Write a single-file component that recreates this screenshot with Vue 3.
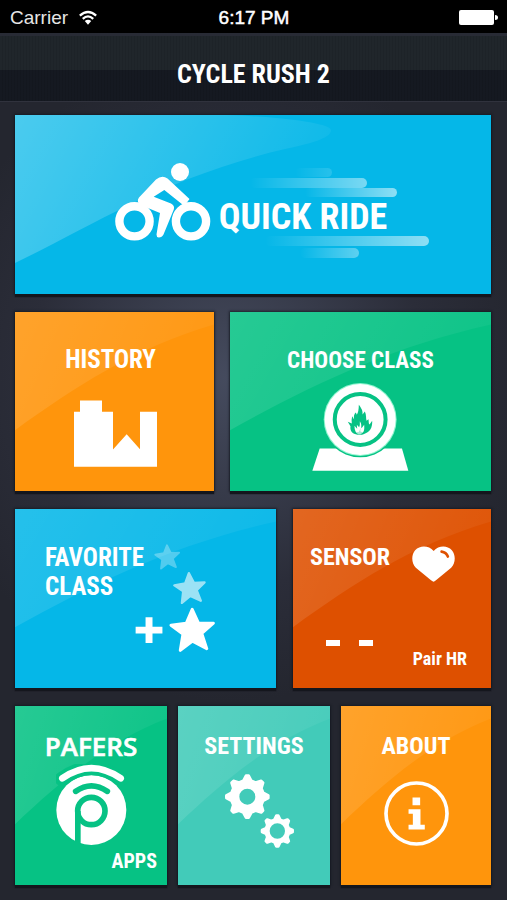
<script setup>
function gear(cx, cy, outer, inner, hole) {
  const teeth = 8
  const step = (Math.PI * 2) / teeth
  const at = (r, a) => `${(cx + r * Math.sin(a)).toFixed(1)} ${(cy - r * Math.cos(a)).toFixed(1)}`
  let d = ''
  for (let i = 0; i < teeth; i++) {
    const a = i * step
    d += `${i ? 'L' : 'M'}${at(inner, a - step * 0.32)}L${at(outer, a - step * 0.08)}L${at(outer, a + step * 0.08)}L${at(inner, a + step * 0.32)}`
  }
  return `${d}Z M${cx - hole} ${cy}a${hole} ${hole} 0 1 0 ${hole * 2} 0a${hole} ${hole} 0 1 0 ${-hole * 2} 0Z`
}

const bigGear = gear(233, 305, 63, 49, 28)
const smallGear = gear(323, 408, 46, 35, 27)
const star = 'M0 -62L19 -20L64 -20L29 11L44 57L1 34L-36 62L-28 13L-64 -14L-18 -20Z'
const gloss = 'M0 0H100V7C60 20 30 42 0 66Z'
</script>

<template>
  <main class="screen">
    <div class="status">
      <div class="carrier">
        <span>Carrier</span>
        <svg class="wifi" viewBox="0 0 60 46" aria-hidden="true">
          <path d="M5 17Q30 -5 55 17M14 27Q30 12 46 27" fill="none" stroke="#fff" stroke-width="7" />
          <path d="M20 34Q30 26 40 34L30 45Z" fill="#fff" />
        </svg>
      </div>
      <span class="clock">6:17 PM</span>
      <svg class="battery" viewBox="0 0 39 16" aria-hidden="true">
        <rect width="35" height="15" rx="2" fill="#fff" />
        <path d="M36 5Q39 5 39 7.5T36 10Z" fill="#fff" />
      </svg>
    </div>

    <header class="bar"><h1>CYCLE RUSH 2</h1></header>

    <nav class="tiles">
      <button class="tile blue hero">
        <svg class="cover" viewBox="0 0 476 179" preserveAspectRatio="none" aria-hidden="true">
          <defs>
            <linearGradient id="shine" x1="0" y1="0" x2="1" y2="0.25">
              <stop offset="0" stop-color="#fff" stop-opacity=".28" />
              <stop offset="1" stop-color="#fff" stop-opacity=".04" />
            </linearGradient>
            <linearGradient id="sheen" x1="0" y1="0" x2="1" y2="0.25">
              <stop offset="0" stop-color="#fff" stop-opacity=".13" />
              <stop offset="1" stop-color="#fff" stop-opacity=".04" />
            </linearGradient>
            <linearGradient id="trail">
              <stop offset="0" stop-color="#fff" stop-opacity="0" />
              <stop offset="1" stop-color="#fff" stop-opacity=".55" />
            </linearGradient>
          </defs>
          <path d="M0 0H210C275 2 315 9 316 15C316 22 303 27 270 34C150 62 75 112 0 148Z" fill="url(#shine)" />
          <g fill="url(#trail)">
            <rect x="280" y="53" width="37" height="9" rx="4.5" opacity=".25" />
            <rect x="235" y="63" width="117" height="10" rx="5" opacity=".85" />
            <rect x="290" y="73" width="92" height="9" rx="4.5" />
            <rect x="250" y="121" width="164" height="10" rx="5" />
            <rect x="285" y="133" width="59" height="10" rx="5" opacity=".65" />
          </g>
        </svg>
        <svg class="cyclist" viewBox="0 0 96 78" aria-hidden="true">
          <g fill="none" stroke="#fff" stroke-width="8.4">
            <circle cx="19.5" cy="58.3" r="15.1" />
            <circle cx="76" cy="58.3" r="15.1" />
          </g>
          <circle cx="65" cy="9" r="9" fill="#fff" />
          <path fill="#fff" d="M24 34.500L41 16.500Q47 11.500 52.500 15.500L74.500 36L69.300 43L49.300 27L38.700 33.700L56 40.500Q60 42.500 58.800 46.500L48.500 71.500Q47 74.500 43.800 74.500Q41.300 74 41.500 71.500L45 50L25.500 42Q21 38.500 24 34.500Z" />
        </svg>
        <span class="label large">QUICK RIDE</span>
      </button>

      <div class="row history-row">
        <button class="tile orange history">
          <svg class="cover" viewBox="0 0 100 100" preserveAspectRatio="none" aria-hidden="true"><path :d="gloss" fill="url(#sheen)" /></svg>
          <span class="label wide">HISTORY</span>
          <svg class="book" viewBox="222 300 249 200" aria-hidden="true">
            <path d="M222 335H240V301H306V335H339V448L380 402L420 447V335H471V500H222Z" fill="#fff" />
          </svg>
        </button>
        <button class="tile green">
          <svg class="cover" viewBox="0 0 100 100" preserveAspectRatio="none" aria-hidden="true"><path :d="gloss" fill="url(#sheen)" /></svg>
          <span class="label narrow">CHOOSE CLASS</span>
          <svg class="medal" viewBox="277 246 290 266" aria-hidden="true">
            <path d="M300 445H546L565 511H278Z" fill="#fff" />
            <circle cx="421" cy="358" r="113" fill="#06c284" />
            <circle cx="421" cy="358" r="109" fill="#8ff5cf" />
            <circle cx="421" cy="358" r="106" fill="#fff" />
            <circle cx="421" cy="358" r="76" fill="none" stroke="#06c284" stroke-width="12" />
            <path fill="#06c284" d="M417 314C427 327 429 334 428 343L435 334C440 345 438 353 440 362L446 357C447 366 446 370 449 373L457 362C458 383 450 397 431 402Q421 405 408 402C393 399 391 387 392 378L384 365L396 370Q394 362 397 348L403 358Q400 344 408 337L411 344Q417 334 417 314Z" />
            <path fill="#fff" d="M420 363C427 373 423 378 425 384L433 374C434 388 434 397 422 402H415C408 399 404 391 404 377L412 386L411 374L418 381Q421 375 420 363Z" />
            <path fill="#06c284" d="M421 383Q423 389 421 393Q429 394 430 402H408Q409 394 416 396Q421 391 421 383Z" opacity=".35" />
          </svg>
        </button>
      </div>

      <div class="row favorite-row">
        <button class="tile blue favorite">
          <svg class="cover" viewBox="0 0 100 100" preserveAspectRatio="none" aria-hidden="true"><path :d="gloss" fill="url(#sheen)" /></svg>
          <span class="favorite-top">
            <span class="label wide">FAVORITE<br />CLASS</span>
            <svg class="stars" viewBox="462 126 156 182" aria-hidden="true">
              <g fill="#fff" stroke="#fff" stroke-linejoin="round" stroke-width="10">
                <path :d="star" transform="translate(502 167) rotate(-2) scale(.56)" opacity=".3" />
                <path :d="star" transform="translate(569 260) rotate(-3) scale(.71)" opacity=".6" />
              </g>
            </svg>
          </span>
          <svg class="add-star" viewBox="404 320 240 136" aria-hidden="true">
            <path d="M435 351H456V380H486V400H456V429H435V400H405V380H435Z" fill="#fff" />
            <path :d="star" transform="translate(576 389)" fill="#fff" stroke="#fff" stroke-width="9" stroke-linejoin="round" />
          </svg>
        </button>
        <button class="tile red sensor">
          <svg class="cover" viewBox="0 0 100 100" preserveAspectRatio="none" aria-hidden="true"><path :d="gloss" fill="url(#sheen)" /></svg>
          <span class="sensor-top">
            <span class="label">SENSOR</span>
            <svg class="heart" viewBox="399 137 129 109" aria-hidden="true">
              <path fill="#fff" d="M464 245Q461 245 456 241L410 203C396 188 396 164 408 150C423 134 449 135 464 152C479 135 505 134 519 150C531 164 531 188 517 203L471 241Q466 245 464 245Z" />
              <path d="M488 154Q502 156 507 169" fill="none" stroke="#de5000" stroke-width="8" stroke-linecap="round" />
            </svg>
          </span>
          <span class="reading" aria-label="No reading"><i></i><i></i></span>
          <span class="pair">Pair HR</span>
        </button>
      </div>

      <div class="row last-row">
        <button class="tile green pafers">
          <svg class="cover" viewBox="0 0 100 100" preserveAspectRatio="none" aria-hidden="true"><path :d="gloss" fill="url(#sheen)" /></svg>
          <span class="brand">PAFERS</span>
          <svg class="logo" viewBox="166 204 213 243" aria-hidden="true">
            <circle cx="272" cy="342" r="105" fill="#fff" />
            <g fill="none" stroke-linecap="round">
              <path d="M183 249Q272 184 362 249" stroke="#06c284" stroke-width="42" />
              <path d="M185 247Q272 186 360 247" stroke="#fff" stroke-width="20" />
              <path d="M225 286Q272 253 320 286" stroke="#06c284" stroke-width="17" />
            </g>
            <circle cx="272" cy="345" r="41" fill="none" stroke="#06c284" stroke-width="17" />
            <path d="M223 345H240V447H223Z" fill="#06c284" />
          </svg>
          <span class="apps">APPS</span>
        </button>
        <button class="tile teal">
          <svg class="cover" viewBox="0 0 100 100" preserveAspectRatio="none" aria-hidden="true"><path :d="gloss" fill="url(#sheen)" /></svg>
          <span class="label">SETTINGS</span>
          <svg class="gears" viewBox="163 237 213 222" aria-hidden="true">
            <g fill="#fff" fill-rule="evenodd" stroke="#fff" stroke-width="8" stroke-linejoin="round">
              <path :d="bigGear" />
              <path :d="smallGear" />
            </g>
          </svg>
        </button>
        <button class="tile orange">
          <svg class="cover" viewBox="0 0 100 100" preserveAspectRatio="none" aria-hidden="true"><path :d="gloss" fill="url(#sheen)" /></svg>
          <span class="label">ABOUT</span>
          <svg class="info" viewBox="163 256 196 196" aria-hidden="true">
            <circle cx="261" cy="354" r="92" fill="none" stroke="#fff" stroke-width="11" />
            <path fill="#fff" d="M249 306H272V329H249ZM237 341H273V388H286V402H237V388H250V355H237Z" />
          </svg>
        </button>
      </div>
    </nav>
  </main>
</template>

<style>
body {
  margin: 0;
  background: #24262f;
}
</style>

<style scoped>
.screen {
  min-height: 100vh;
  box-sizing: border-box;
  color: #fff;
  font-family: "Liberation Sans Narrow", "Roboto Condensed", "Liberation Sans", sans-serif;
  background: radial-gradient(ellipse 60% 36% at 45% 42%, #454b5e, #2b2d39 65%, #24262f);
}
.status {
  display: grid;
  grid-template-columns: 1fr auto 1fr;
  align-items: center;
  height: 33px;
  padding: 2px 9px 0 10px;
  box-sizing: border-box;
  background: #000;
  font: 19px/22px "Liberation Sans", Arial, sans-serif;
}
.carrier {
  display: flex;
  align-items: center;
  gap: 10px;
  color: #e6e6e6;
}
.wifi {
  width: 20px;
  height: 15px;
}
.clock {
  -webkit-text-stroke: 0.5px #fff;
}
.battery {
  width: 39px;
  height: 16px;
  justify-self: end;
}
.bar {
  height: 69px;
  box-sizing: border-box;
  display: flex;
  align-items: center;
  justify-content: center;
  padding-top: 10px;
  border-top: 3px solid #282b35;
  border-bottom: 1px solid #30323d;
  background:
    repeating-linear-gradient(90deg, transparent 0 2px, rgba(0, 0, 0, 0.08) 2px 3px),
    linear-gradient(#20262b 0 52%, #151921 52%);
}
h1 {
  margin: 0;
  font-size: 26px;
  line-height: 28px;
  font-weight: 700;
}
.tiles {
  display: flex;
  flex-direction: column;
  gap: 18px;
  padding: 13px 16px 15px 15px;
}
.row {
  display: grid;
}
.history-row {
  grid-template-columns: 199fr 261fr;
  gap: 16px;
}
.favorite-row {
  grid-template-columns: 261fr 198fr;
  gap: 17px;
}
.last-row {
  grid-template-columns: 152fr 152fr 150fr;
  gap: 11px;
}
.tile {
  position: relative;
  display: flex;
  flex-direction: column;
  align-items: center;
  min-width: 0;
  min-height: 179px;
  box-sizing: border-box;
  padding: 34px 0 0;
  border: 0;
  color: inherit;
  font: inherit;
  cursor: pointer;
  box-shadow: 0 3px 1px #14161d, 0 0 2px 1px rgba(18, 24, 32, 0.7);
}
.tile > * {
  position: relative;
}
.tile > .cover {
  position: absolute;
  inset: 0;
  width: 100%;
  height: 100%;
}
.blue { background: #05b7e8; }
.orange { background: #ff950c; }
.green { background: #06c284; }
.red { background: #de5000; }
.teal { background: #42cbb9; }
.label {
  font-size: 24px;
  line-height: 29px;
  font-weight: 700;
}
.label.narrow {
  font-size: 23px;
}
.label.wide {
  font-size: 25px;
}
.label.large {
  font-size: 36px;
  line-height: 48px;
}
.hero {
  flex-direction: row;
  justify-content: center;
  align-items: flex-end;
  gap: 8px;
  padding: 0 4px 53px 0;
}
.cyclist {
  width: 96px;
  height: 78px;
}
.history {
  padding: 33px 8px 0 0;
}
.book {
  width: 83px;
  height: 67px;
  margin: 26px 0 0 10px;
}
.medal {
  width: 97px;
  height: 89px;
  margin-top: 7px;
}
.favorite {
  align-items: flex-start;
  padding: 34px 0 0 30px;
  text-align: left;
}
.favorite-top {
  display: flex;
  gap: 10px;
}
.stars {
  width: 52px;
  height: 61px;
}
.add-star {
  width: 80px;
  height: 45px;
  margin: 3px 0 0 90px;
}
.sensor {
  align-items: stretch;
  padding: 34px 24px 0 17px;
}
.sensor-top {
  display: flex;
  align-items: flex-start;
  justify-content: space-between;
  padding-right: 12px;
}
.heart {
  width: 43px;
  height: 36px;
  margin-top: 3px;
}
.reading {
  display: flex;
  gap: 19px;
  margin: 58px 0 0 16px;
}
.reading i {
  width: 14px;
  height: 6px;
  background: #fff;
}
.pair {
  align-self: flex-end;
  font-size: 18px;
  line-height: 26px;
  font-weight: 700;
}
.last-row .tile {
  padding-top: 26px;
}
.last-row .pafers {
  padding-bottom: 11px;
}
.brand {
  font: 600 26px/29px "Open Sans", "Noto Sans", sans-serif;
  -webkit-text-stroke: 0.6px #fff;
}
.logo {
  width: 71px;
  height: 81px;
  margin-top: 3px;
}
.apps {
  align-self: flex-end;
  margin-right: 10px;
  margin-top: 4px;
  font-size: 20px;
  line-height: 24px;
  font-weight: 700;
}
.gears {
  width: 71px;
  height: 74px;
  margin: 13px 0 0 10px;
}
.info {
  width: 65px;
  height: 65px;
  margin-top: 20px;
}
</style>
